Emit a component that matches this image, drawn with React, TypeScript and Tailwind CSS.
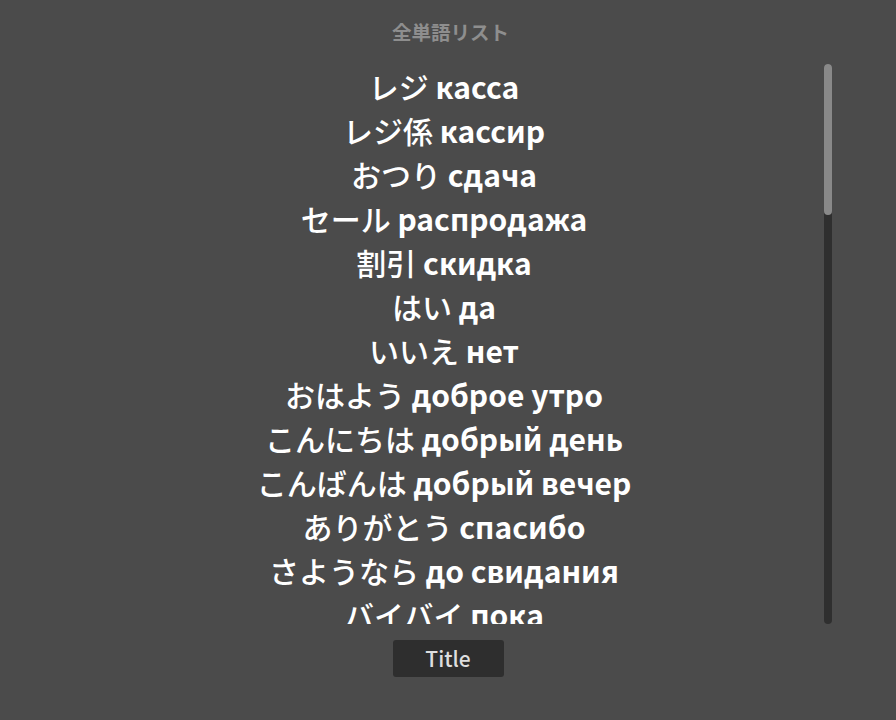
import React from "react";

const words: string[] = [
  "レジ касса",
  "レジ係 кассир",
  "おつり сдача",
  "セール распродажа",
  "割引 скидка",
  "はい да",
  "いいえ нет",
  "おはよう доброе утро",
  "こんにちは добрый день",
  "こんばんは добрый вечер",
  "ありがとう спасибо",
  "さようなら до свидания",
  "バイバイ пока",
  "すみません извините",
  "ごめんなさい простите",
  "おやすみ спокойной ночи",
  "水 вода",
  "お茶 чай",
  "コーヒー кофе",
  "パン хлеб",
  "牛乳 молоко",
  "肉 мясо",
  "魚 рыба",
  "野菜 овощи",
  "果物 фрукты",
  "りんご яблоко",
  "店 магазин",
  "駅 вокзал",
  "空港 аэропорт",
  "ホテル гостиница",
  "病院 больница",
  "薬 лекарство",
  "銀行 банк",
  "お金 деньги",
  "値段 цена",
  "高い дорогой",
  "安い дешёвый",
  "今日 сегодня",
  "明日 завтра",
  "昨日 вчера",
  "友達 друг",
  "家族 семья",
  "学校 школа",
  "先生 учитель",
  "学生 студент",
  "仕事 работа",
  "トイレ туалет",
];

export default function App() {
  return (
    <div
      className="h-[720px] w-[896px] bg-[#4b4b4b] flex flex-col items-center"
      style={{ fontFamily: '"Noto Sans CJK JP", "Noto Sans", sans-serif' }}
    >
      <div className="h-[64px] pl-[5px] flex items-center justify-center text-[19.5px] font-bold text-[#8e8e8e]">
        全単語リスト
      </div>
      <div className="relative w-[768px] h-[560px]">
        <div className="h-full overflow-y-scroll pr-[8px] [scrollbar-width:none] [&::-webkit-scrollbar]:hidden">
          {words.map((w, i) => {
            const sp = w.indexOf(" ");
            const ja = w.slice(0, sp);
            const ru = w.slice(sp + 1);
            return (
              <div
                key={i}
                className="h-[44px] leading-[44px] text-center text-[30px] text-white whitespace-nowrap"
              >
                <span className="font-medium">{ja}</span>{" "}
                <span className="font-bold">{ru}</span>
              </div>
            );
          })}
        </div>
        <div className="absolute right-0 top-0 w-[8px] h-full rounded-full bg-[#2f2f2f]">
          <div className="w-full h-[151px] rounded-full bg-[#898989]" />
        </div>
      </div>
      <button className="mt-[16px] h-[37px] w-[111px] rounded-[3px] bg-[#2e2e2e] text-[21px] font-medium text-[#dedede] flex items-center justify-center">
        Title
      </button>
    </div>
  );
}
